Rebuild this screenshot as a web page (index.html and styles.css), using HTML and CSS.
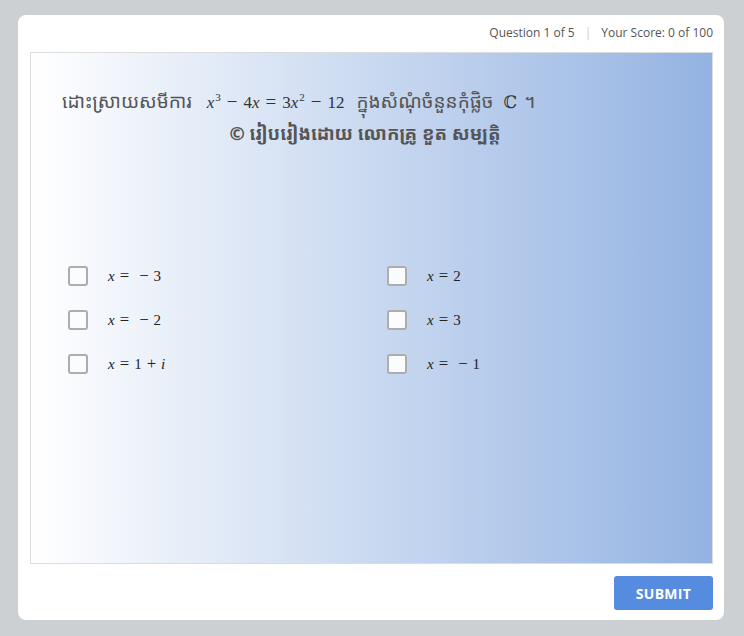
FILE: index.html
```html
<!DOCTYPE html>
<html lang="km">
<head>
<meta charset="utf-8">
<link rel="stylesheet" href="styles.css">
</head>
<body>
<div class="card">
  <div class="topbar">
    <span>Question 1 of 5</span>
    <span class="sep">|</span>
    <span>Your Score: 0 of 100</span>
  </div>
  <div class="panel">
    <div class="question">
      <p class="q1">ដោះស្រាយសមីការ <span class="math big"><i>x</i><sup>3</sup><span class="op">−</span>4<i>x</i><span class="op">=</span>3<i>x</i><sup>2</sup><span class="op">−</span>12</span> ក្នុងសំណុំចំនួនកុំផ្លិច <span class="math cset">ℂ</span> ។</p>
      <p class="q2">© រៀបរៀងដោយ លោកគ្រូ ខួត សម្បត្តិ</p>
    </div>
    <div class="options">
      <label class="opt"><span class="box"></span><span class="math"><i>x</i><span class="op">=</span><span class="op">−</span>3</span></label>
      <label class="opt"><span class="box"></span><span class="math"><i>x</i><span class="op">=</span>2</span></label>
      <label class="opt"><span class="box"></span><span class="math"><i>x</i><span class="op">=</span><span class="op">−</span>2</span></label>
      <label class="opt"><span class="box"></span><span class="math"><i>x</i><span class="op">=</span>3</span></label>
      <label class="opt"><span class="box"></span><span class="math"><i>x</i><span class="op">=</span>1<span class="op">+</span><i>i</i></span></label>
      <label class="opt"><span class="box"></span><span class="math"><i>x</i><span class="op">=</span><span class="op">−</span>1</span></label>
    </div>
  </div>
  <div class="footer">
    <button class="submit">SUBMIT</button>
  </div>
</div>
</body>
</html>
```
FILE: styles.css
```css
html, body {
  margin: 0;
  padding: 0;
}
body {
  background: #cdd0d3;
  width: 744px;
  height: 636px;
  overflow: hidden;
  font-family: "Open Sans", "Noto Sans", sans-serif;
}
.card {
  box-sizing: border-box;
  width: 706px;
  height: 605px;
  margin: 15px 0 0 18px;
  background: #fff;
  border-radius: 8px;
  padding: 0 11px 0 12px;
}
.topbar {
  height: 37px;
  display: flex;
  justify-content: flex-end;
  align-items: center;
  padding-bottom: 2px;
  box-sizing: border-box;
  font-size: 12px;
  color: #555;
}
.sep {
  color: #ccc;
  margin: 0 10px;
}
.panel {
  box-sizing: border-box;
  height: 512px;
  border: 1px solid #dcdcdc;
  background: linear-gradient(to right, #ffffff 0%, #94b3e2 100%);
}
.question {
  padding: 33px 0 0 31px;
  color: #555;
  font-family: "Noto Sans Khmer", "Noto Serif Khmer", "Khmer OS", "Noto Sans", sans-serif;
}
.q1 {
  margin: 0;
  font-size: 19px;
  line-height: 30px;
}
.q2 {
  margin: 0;
  font-size: 18.5px;
  font-weight: bold;
  line-height: 30px;
  text-align: center;
  padding-right: 44px;
}
.math {
  font-family: "Liberation Serif", "DejaVu Serif", serif;
  font-size: 17px;
  color: #333;
  margin: 0 4px;
}
.math.big {
  margin: 0 7px 0 10px;
}
.math .op {
  margin: 0 6px;
  font-size: 1.12em;
  line-height: 0;
}
.math sup {
  font-size: 11px;
  vertical-align: 7px;
  line-height: 0;
  margin-left: 1px;
}
.cset {
  margin: 0 2px 0 5px;
}
.options {
  display: grid;
  grid-template-columns: 319px 300px;
  row-gap: 24px;
  padding: 118px 0 0 37px;
}
.opt {
  display: flex;
  align-items: center;
  height: 20px;
}
.opt .math {
  font-size: 15px;
  color: #222;
  margin: 0 0 0 20px;
}
.opt .math .op {
  margin: 0 5px;
}
.box {
  box-sizing: border-box;
  width: 20px;
  height: 20px;
  border: 2px solid #adadad;
  border-radius: 3px;
  background: #fbfcfe;
}
.footer {
  display: flex;
  justify-content: flex-end;
  padding-top: 12px;
}
.submit {
  width: 99px;
  height: 34px;
  border: none;
  border-radius: 3px;
  background: #568ce0;
  color: #fff;
  font-family: "Open Sans", sans-serif;
  font-weight: bold;
  font-size: 14px;
  letter-spacing: 0.3px;
}
```
